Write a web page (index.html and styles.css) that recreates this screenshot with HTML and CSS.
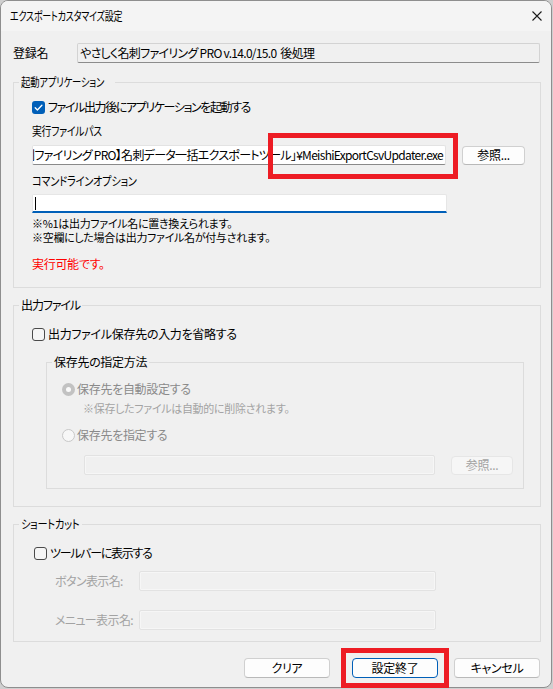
FILE: index.html
```html
<!DOCTYPE html>
<html lang="ja">
<head>
<meta charset="utf-8">
<title>エクスポートカスタマイズ設定</title>
<link rel="stylesheet" href="styles.css">
</head>
<body>
<div class="window">
  <div class="titlebar">
    <span class="title">エクスポートカスタマイズ設定</span>
    <svg class="close" width="10" height="10" viewBox="0 0 10 10"><path d="M0.5 0.5L9.5 9.5M9.5 0.5L0.5 9.5" stroke="#1b1b1b" stroke-width="1.1" fill="none"/></svg>
  </div>
  <div class="content">
    <div class="name-row">
      <span class="name-label">登録名</span>
      <div class="field readonly name-field">やさしく名刺ファイリング PRO v.14.0/15.0  後処理</div>
    </div>

    <fieldset class="group g-app">
      <legend><span class="lg-text lg-app">起動アプリケーション</span></legend>
      <div class="group-body app-body">
        <div class="check-row">
          <span class="checkbox checked"><svg width="13" height="13" viewBox="0 0 13 13"><path d="M3.2 6.8L5.4 9L9.9 4.3" stroke="#fff" stroke-width="1.3" fill="none" stroke-linecap="round" stroke-linejoin="round"/></svg></span>
          <span class="run-check">ファイル出力後にアプリケーションを起動する</span>
        </div>
        <div class="label exe-label">実行ファイルパス</div>
        <div class="path-row">
          <div class="field path-field"><span class="path-text">【やさしく名刺ファイリング PRO】名刺データ一括エクスポートツール」¥MeishiExportCsvUpdater.exe</span></div>
          <button class="btn browse">参照...</button>
        </div>
        <div class="label cmd-label">コマンドラインオプション</div>
        <div class="field cmd-field"><span class="caret"></span></div>
        <div class="notes">
          <div class="note-line">※%1は出力ファイル名に置き換えられます。</div>
          <div class="note-line">※空欄にした場合は出力ファイル名が付与されます。</div>
        </div>
        <div class="status">実行可能です。</div>
      </div>
    </fieldset>

    <fieldset class="group g-out">
      <legend class="lg-out">出力ファイル</legend>
      <div class="group-body out-body">
        <div class="check-row">
          <span class="checkbox"></span>
          <span>出力ファイル保存先の入力を省略する</span>
        </div>
        <fieldset class="group g-inner">
          <legend>保存先の指定方法</legend>
          <div class="group-body inner-body">
            <div class="radio-row disabled">
              <span class="radio checked"><span class="dot"></span></span>
              <span>保存先を自動設定する</span>
            </div>
            <div class="sub-note">※保存したファイルは自動的に削除されます。</div>
            <div class="radio-row disabled second">
              <span class="radio"></span>
              <span>保存先を指定する</span>
            </div>
            <div class="dest-row">
              <div class="field disabled-field dest-field"></div>
              <button class="btn disabled-btn dest-browse">参照...</button>
            </div>
          </div>
        </fieldset>
      </div>
    </fieldset>

    <fieldset class="group g-short">
      <legend><span class="lg-text lg-short">ショートカット</span></legend>
      <div class="group-body short-body">
        <div class="check-row short-check">
          <span class="checkbox"></span>
          <span class="toolbar-check">ツールバーに表示する</span>
        </div>
        <div class="name-line first-line">
          <span class="dim-label">ボタン表示名:</span>
          <div class="field disabled-field short-field"></div>
        </div>
        <div class="name-line second-line">
          <span class="dim-label">メニュー表示名:</span>
          <div class="field disabled-field short-field"></div>
        </div>
      </div>
    </fieldset>

    <div class="actions">
      <button class="btn action">クリア</button>
      <button class="btn action default">設定終了</button>
      <button class="btn action">キャンセル</button>
    </div>
  </div>
</div>
<div class="highlight hl-path"></div>
<div class="highlight hl-ok"></div>
</body>
</html>
```

FILE: styles.css
```css
html, body {
  margin: 0;
  padding: 0;
}

body {
  position: relative;
  width: 553px;
  height: 689px;
  overflow: hidden;
  background: #cfcfcf;
  font-family: "Noto Sans CJK JP", "Noto Sans", sans-serif;
  font-size: 12px;
  font-feature-settings: "palt";
  letter-spacing: -0.3px;
  color: #000;
}

.window {
  box-sizing: border-box;
  width: 552px;
  height: 688px;
  border: 1px solid #8e8e8e;
  border-radius: 8px;
  background: #f0f0f0;
  overflow: hidden;
}

.titlebar {
  height: 30px;
  display: flex;
  align-items: center;
  justify-content: space-between;
  padding: 0 9px;
  background: #f4f4f4;
}

.title {
  display: inline-block;
  line-height: 16px;
  white-space: nowrap;
  transform: scaleX(0.75);
  transform-origin: left center;
}

.close {
  display: block;
}

.content {
  padding: 0 10px 0 12px;
}

.name-row {
  display: flex;
  align-items: center;
  margin-top: 12px;
  height: 20px;
}

.name-label {
  width: 64px;
  line-height: 16px;
}

.field {
  box-sizing: border-box;
  height: 20px;
  line-height: 16px;
}

.readonly {
  background: #f0f0f0;
  border: 1px solid #d3d3d3;
  border-bottom-color: #8c8c8c;
  border-radius: 2px;
  padding: 1px 0 0 2px;
  white-space: pre;
  letter-spacing: -0.7px;
}

.name-field {
  width: 463px;
}

/* group boxes */
.group {
  margin: 0;
  padding: 0;
  border: 1px solid #dcdcdc;
  min-width: 0;
}

.group legend {
  margin-left: 5px;
  padding: 0 2px;
  line-height: 16px;
}

.lg-text {
  display: inline-block;
  white-space: nowrap;
  vertical-align: top;
  transform-origin: left center;
}

.lg-app {
  width: 92px;
  transform: scaleX(0.78);
}

.lg-short {
  width: 59px;
  transform: scaleX(0.85);
}

.group legend.lg-out {
  letter-spacing: -1.1px;
}

.g-app {
  margin-top: 11px;
}

.app-body {
  padding: 9px 0 15px 18px;
}

.check-row {
  display: flex;
  align-items: center;
  height: 16px;
  line-height: 16px;
  gap: 3px;
}

.run-check {
  letter-spacing: -1.4px;
}

.toolbar-check {
  letter-spacing: -1.3px;
}

.checkbox {
  box-sizing: border-box;
  width: 13px;
  height: 13px;
  border: 1px solid #4a4a4a;
  border-radius: 3px;
  background: #f5f5f5;
  flex: 0 0 13px;
}

.checkbox.checked {
  border: none;
  background: #005fb8;
}

.checkbox svg {
  display: block;
}

.label {
  line-height: 16px;
  white-space: nowrap;
}

.exe-label {
  margin-top: 8px;
  width: 78px;
  transform: scaleX(0.82);
  transform-origin: left center;
}

.path-row {
  display: flex;
  align-items: center;
  margin-top: 6px;
}

.path-field {
  width: 414px;
  background: #fff;
  border: 1px solid #e3e3e3;
  border-bottom-color: #8a8a8a;
  border-radius: 2px;
  overflow: hidden;
  display: flex;
  justify-content: flex-end;
  align-items: center;
  padding-right: 2px;
}

.path-text {
  white-space: nowrap;
  flex: 0 0 auto;
  letter-spacing: -0.7px;
}

.btn {
  box-sizing: border-box;
  font-family: inherit;
  font-size: 12px;
  font-feature-settings: "palt";
  letter-spacing: -0.3px;
  color: #000;
  background: #fdfdfd;
  border: 1px solid #d0d0d0;
  border-bottom-color: #b9b9b9;
  border-radius: 4px;
  padding: 0;
  line-height: 16px;
  margin: 0;
}

.browse {
  width: 63px;
  height: 19px;
  margin-left: 16px;
}

.cmd-label {
  margin-top: 8px;
  width: 105px;
  transform: scaleX(0.85);
  transform-origin: left center;
}

.cmd-field {
  width: 415px;
  height: 19px;
  margin-top: 5px;
  background: #fff;
  border: 1px solid #e6e6e6;
  border-bottom: 2px solid #005fb8;
  border-radius: 2px 2px 0 0;
  display: flex;
  align-items: center;
  padding-left: 2px;
}

.caret {
  display: block;
  width: 1px;
  height: 13px;
  background: #000;
}

.notes {
  margin-top: 3px;
  font-size: 11px;
}

.note-line {
  height: 14px;
  line-height: 14px;
}

.status {
  margin-top: 12px;
  line-height: 16px;
  color: #ff0000;
}

/* output group */
.g-out {
  margin-top: 9px;
}

.out-body {
  padding: 13px 0 17px 18px;
}

.g-inner {
  margin-top: 12px;
  margin-left: 14px;
  width: 478px;
  box-sizing: border-box;
}

.inner-body {
  padding: 11px 0 13px 15px;
}

.radio-row {
  display: flex;
  align-items: center;
  gap: 2px;
  height: 16px;
  line-height: 16px;
}

.radio-row.disabled {
  color: #8a8a8a;
}

.radio-row.second {
  margin-top: 11px;
}

.radio {
  box-sizing: border-box;
  width: 13px;
  height: 13px;
  border-radius: 50%;
  border: 1px solid #c8c8c8;
  background: #f7f7f7;
  flex: 0 0 13px;
  display: flex;
  align-items: center;
  justify-content: center;
}

.radio.checked {
  border: none;
  background: #c2c2c2;
}

.radio .dot {
  width: 5px;
  height: 5px;
  border-radius: 50%;
  background: #fafafa;
}

.sub-note {
  margin-top: 3px;
  margin-left: 21px;
  font-size: 11px;
  line-height: 16px;
  color: #a3a3a3;
}

.dest-row {
  display: flex;
  align-items: center;
  margin-top: 12px;
  margin-left: 22px;
}

.disabled-field {
  background: #f0f0f0;
  border: 1px solid #e2e2e2;
  border-radius: 2px;
  box-shadow: inset 0 0 0 1px #f6f6f6;
}

.dest-field {
  width: 351px;
}

.disabled-btn {
  background: #f6f6f6;
  border: 1px solid #e6e6e6;
  color: #a3a3a3;
}

.dest-browse {
  width: 62px;
  height: 19px;
  margin-left: 16px;
}

/* shortcut group */
.g-short {
  margin-top: 9px;
}

.short-body {
  padding: 13px 0 11px 18px;
}

.short-check {
  margin-left: 2px;
}

.name-line {
  display: flex;
  align-items: center;
  margin-left: 23px;
  height: 20px;
}

.first-line {
  margin-top: 10px;
}

.second-line {
  margin-top: 19px;
}

.dim-label {
  flex: 0 0 84px;
  width: 84px;
  line-height: 16px;
  white-space: nowrap;
  letter-spacing: -0.6px;
  color: #a3a3a3;
}

.short-field {
  width: 297px;
}

/* bottom buttons */
.actions {
  display: flex;
  justify-content: flex-end;
  margin-top: 16px;
  padding-right: 1px;
}

.action {
  width: 86px;
  height: 20px;
}

.action + .action {
  margin-left: 16px;
}

.action.default {
  margin-left: 22px;
  border: 1px solid #005fb8;
}

/* red annotation boxes laid over the dialog */
.highlight {
  position: absolute;
  box-sizing: border-box;
  border: 5px solid #ed1c24;
}

.hl-path {
  left: 268px;
  top: 133px;
  width: 190px;
  height: 46px;
}

.hl-ok {
  left: 341px;
  top: 648px;
  width: 108px;
  height: 40px;
}
```
